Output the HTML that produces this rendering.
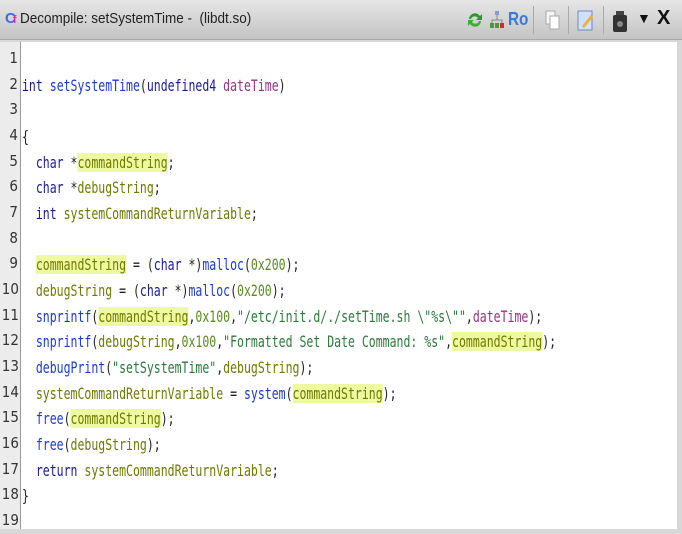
<!DOCTYPE html>
<html><head><meta charset="utf-8"><style>
body{margin:0;width:682px;height:529px;overflow:hidden;background:#d8d8d8;font-family:"Liberation Sans",sans-serif;position:relative}
.title{position:absolute;left:0;top:0;width:682px;height:39px;background:linear-gradient(#e6e6e6,#c4c4c4);border-bottom:1px solid #a8a8a8}
.ttext{position:absolute;left:20px;top:10px;font-size:15px;color:#222;transform:scaleX(.9);transform-origin:left}
.panel{position:absolute;left:0;top:42px;width:676px;height:487px;background:#fff;border-left:1px solid #bbb}
.gut{position:absolute;left:0;top:42px;width:20px;height:487px;background:#ececec;border-right:1px solid #999}
.nums{position:absolute;left:0;top:46px;width:18px;text-align:right;font-family:"DejaVu Sans",sans-serif;font-size:15px;line-height:25.67px;color:#333;white-space:pre;transform:scaleX(.9);transform-origin:right top}
.code{position:absolute;left:22px;top:47px;font-family:"DejaVu Sans Mono",monospace;font-size:16px;line-height:25.67px;white-space:pre;transform:scaleX(.72);transform-origin:left top;color:#222}
.t{color:#1a1a9a}.f{color:#1a3ad8}.v{color:#6f7a00}.p{color:#993380}.s{color:#2c7a3a}.c{color:#5a8a20}
.h{background:#eefaa0}
.ico{position:absolute;top:10px}
</style></head><body>
<div class="title">
<div style="position:absolute;left:5px;top:10px;font:bold 15px 'Liberation Sans';color:#3b6ee0">C<span style="color:#d02fb0;font-size:11px;margin-left:-3px">f</span></div>
<div class="ttext">Decompile: setSystemTime - &nbsp;(libdt.so)</div>
<svg class="ico" style="left:466px" width="18" height="20"><path d="M3 9a6 6 0 0 1 11-3l2-2v6h-6l2-2a4 4 0 0 0-7 1z" fill="#2a9a2a"/><path d="M15 11a6 6 0 0 1-11 3l-2 2v-6h6l-2 2a4 4 0 0 0 7-1z" fill="#3ab03a"/></svg>
<svg class="ico" style="left:489px" width="16" height="20"><rect x="6" y="1" width="4" height="4" fill="#7aa0d8"/><rect x="1" y="13" width="4" height="5" fill="#4a9a3a"/><rect x="6" y="13" width="4" height="5" fill="#4a9a3a"/><rect x="11" y="13" width="4" height="5" fill="#c83030"/><path d="M8 5v5M3 13v-3h10v3" stroke="#888" fill="none"/></svg>
<div style="position:absolute;left:508px;top:9px;font:bold 18px 'Liberation Sans';color:#3a7ad8;transform:scaleX(.85);transform-origin:left">Ro</div>
<div style="position:absolute;left:533px;top:6px;width:1px;height:28px;background:#aaa"></div>
<svg class="ico" style="left:545px" width="16" height="22"><rect x="1" y="1" width="9" height="13" fill="#f4f4f4" stroke="#aaa"/><rect x="5" y="6" width="9" height="13" fill="#fff" stroke="#aaa"/></svg>
<div style="position:absolute;left:568px;top:6px;width:1px;height:28px;background:#aaa"></div>
<svg class="ico" style="left:577px" width="18" height="22"><rect x="1" y="1" width="14" height="19" fill="#cfe0f8" stroke="#6a8ac8"/><path d="M5 16l9-11 2 2-9 11z" fill="#f0b030"/></svg>
<div style="position:absolute;left:603px;top:6px;width:1px;height:28px;background:#aaa"></div>
<svg class="ico" style="left:611px" width="18" height="24"><rect x="5" y="1" width="8" height="5" fill="#444"/><rect x="2" y="5" width="14" height="17" rx="2" fill="#333"/><circle cx="9" cy="14" r="3" fill="#888"/></svg>
<div style="position:absolute;left:637px;top:10px;font-size:14px;color:#111">▼</div>
<div style="position:absolute;left:657px;top:7px;font:bold 20px 'Liberation Sans';color:#111">X</div>
</div>
<div class="panel"></div>
<div class="gut"></div>
<div class="nums">1
2
3
4
5
6
7
8
9
10
11
12
13
14
15
16
17
18
19</div>
<div class="code">
<span class="t">int</span> <span class="f">setSystemTime</span>(<span class="t">undefined4</span> <span class="p">dateTime</span>)

{
  <span class="t">char</span> *<span class="v h">commandString</span>;
  <span class="t">char</span> *<span class="v">debugString</span>;
  <span class="t">int</span> <span class="v">systemCommandReturnVariable</span>;

  <span class="v h">commandString</span> = (<span class="t">char</span> *)<span class="f">malloc</span>(<span class="c">0x200</span>);
  <span class="v">debugString</span> = (<span class="t">char</span> *)<span class="f">malloc</span>(<span class="c">0x200</span>);
  <span class="f">snprintf</span>(<span class="v h">commandString</span>,<span class="c">0x100</span>,<span class="s">"/etc/init.d/./setTime.sh \"%s\""</span>,<span class="p">dateTime</span>);
  <span class="f">snprintf</span>(<span class="v">debugString</span>,<span class="c">0x100</span>,<span class="s">"Formatted Set Date Command: %s"</span>,<span class="v h">commandString</span>);
  <span class="f">debugPrint</span>(<span class="s">"setSystemTime"</span>,<span class="v">debugString</span>);
  <span class="v">systemCommandReturnVariable</span> = <span class="f">system</span>(<span class="v h">commandString</span>);
  <span class="f">free</span>(<span class="v h">commandString</span>);
  <span class="f">free</span>(<span class="v">debugString</span>);
  <span class="t">return</span> <span class="v">systemCommandReturnVariable</span>;
}
</div>
</body></html>
